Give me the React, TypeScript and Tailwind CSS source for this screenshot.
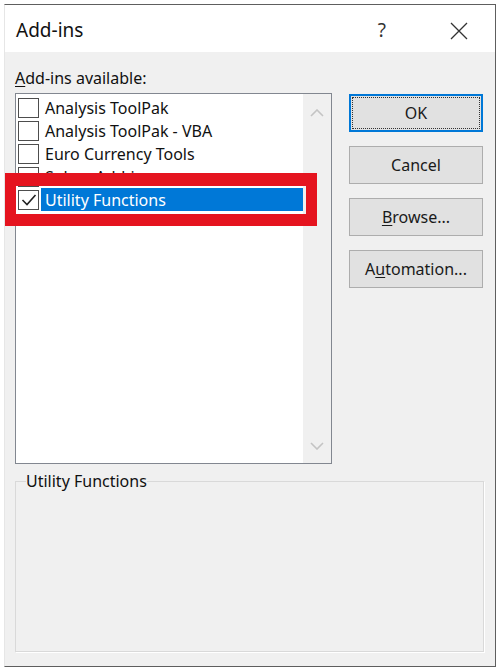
import React from "react";

const FONT = { fontFamily: '"Noto Sans", "Open Sans", Arial, sans-serif' };

const items = [
  { name: "Analysis ToolPak", checked: false },
  { name: "Analysis ToolPak - VBA", checked: false },
  { name: "Euro Currency Tools", checked: false },
  { name: "Solver Add-in", checked: false },
  { name: "Utility Functions", checked: true, selected: true },
];

function Chevron({ up }: { up?: boolean }) {
  return (
    <svg width="14" height="8" viewBox="0 0 14 8" fill="none">
      <path
        d={up ? "M1 7 L7 1 L13 7" : "M1 1 L7 7 L13 1"}
        stroke="#c4c4c4"
        strokeWidth="1.6"
      />
    </svg>
  );
}

function Btn({ children, focus }: { children: React.ReactNode; focus?: boolean }) {
  return (
    <div
      className={
        "h-[38px] w-full bg-[#e1e1e1] text-[16px] text-[#1a1a1a] flex items-center justify-center " +
        (focus ? "border-2 border-[#0078d7] p-[1px]" : "border border-[#adadad]")
      }
    >
      {focus ? (
        <div className="w-full h-full border border-dotted border-[#333] flex items-center justify-center">
          {children}
        </div>
      ) : (
        children
      )}
    </div>
  );
}

export default function App() {
  return (
    <div className="w-[499px] h-[669px] bg-white overflow-hidden" style={FONT}>
      <div className="ml-[4px] mt-[4px] w-[492px] h-[663px] border-t border-r border-b border-l border-[#5e5e5e] border-l-[#e6e6e6] flex flex-col">
        {/* title bar */}
        <div className="h-[47px] bg-white flex items-center pl-[11px] pt-[4px] text-[19px] text-[#111]">
          <span>Add-ins</span>
          <span className="ml-auto mr-[64px] text-[19px] text-[#333]">?</span>
          <svg className="mr-[27px]" width="18" height="18" viewBox="0 0 18 18">
            <path d="M1 1 L17 17 M17 1 L1 17" stroke="#333" strokeWidth="1.3" />
          </svg>
        </div>

        {/* body */}
        <div className="flex-1 bg-[#f0f0f0] pl-[10px]">
          <div className="mt-[16px] leading-[20px] text-[16px] text-[#111]">
            <span className="underline underline-offset-2">A</span>dd-ins available:
          </div>

          <div className="flex mt-[5px]">
            <div className="relative w-[317px] h-[371px] border border-[#828790] bg-white flex">
              <div className="flex-1 pt-[2px]">
                {items.map((it) => (
                  <div key={it.name} className="h-[23px] flex items-center">
                    <div className="ml-[2px] w-[21px] h-[20px] border border-[#4d4d4d] bg-white flex items-center justify-center shrink-0">
                      {it.checked && (
                        <svg width="16" height="14" viewBox="0 0 16 14" fill="none">
                          <path d="M1.5 7 L6 11.5 L14.5 2" stroke="#222" strokeWidth="1.6" />
                        </svg>
                      )}
                    </div>
                    <div
                      className={
                        "ml-[2px] h-[23px] flex-1 flex items-center pl-[4px] text-[16px] whitespace-nowrap " +
                        (it.selected ? "bg-[#0078d7] text-white" : "text-[#111]")
                      }
                    >
                      {it.name}
                    </div>
                  </div>
                ))}
              </div>
              <div className="w-[28px] bg-[#f0f0f0] flex flex-col items-center justify-between pt-[15px] pb-[13px]">
                <Chevron up />
                <Chevron />
              </div>

              {/* red annotation */}
              <div className="absolute left-[-11px] top-[79px] w-[312px] h-[53px] border-x-[11px] border-t-[13px] border-b-[12px] border-[#e5141f]" />
            </div>

            <div className="ml-[17px] mt-[1px] w-[134px] flex flex-col gap-[14px]">
              <Btn focus>OK</Btn>
              <Btn>Cancel</Btn>
              <Btn>
                <span>
                  <span className="underline underline-offset-2">B</span>rowse...
                </span>
              </Btn>
              <Btn>
                <span>
                  A<span className="underline underline-offset-2">u</span>tomation...
                </span>
              </Btn>
            </div>
          </div>

          <fieldset className="mt-[7px] w-[469px] h-[181px] border border-[#d9d9d9] shadow-[1px_1px_0_#ffffff]">
            <legend className="ml-[10px] text-[16px] leading-[20px] text-[#111]">Utility Functions</legend>
          </fieldset>
        </div>
      </div>
    </div>
  );
}
